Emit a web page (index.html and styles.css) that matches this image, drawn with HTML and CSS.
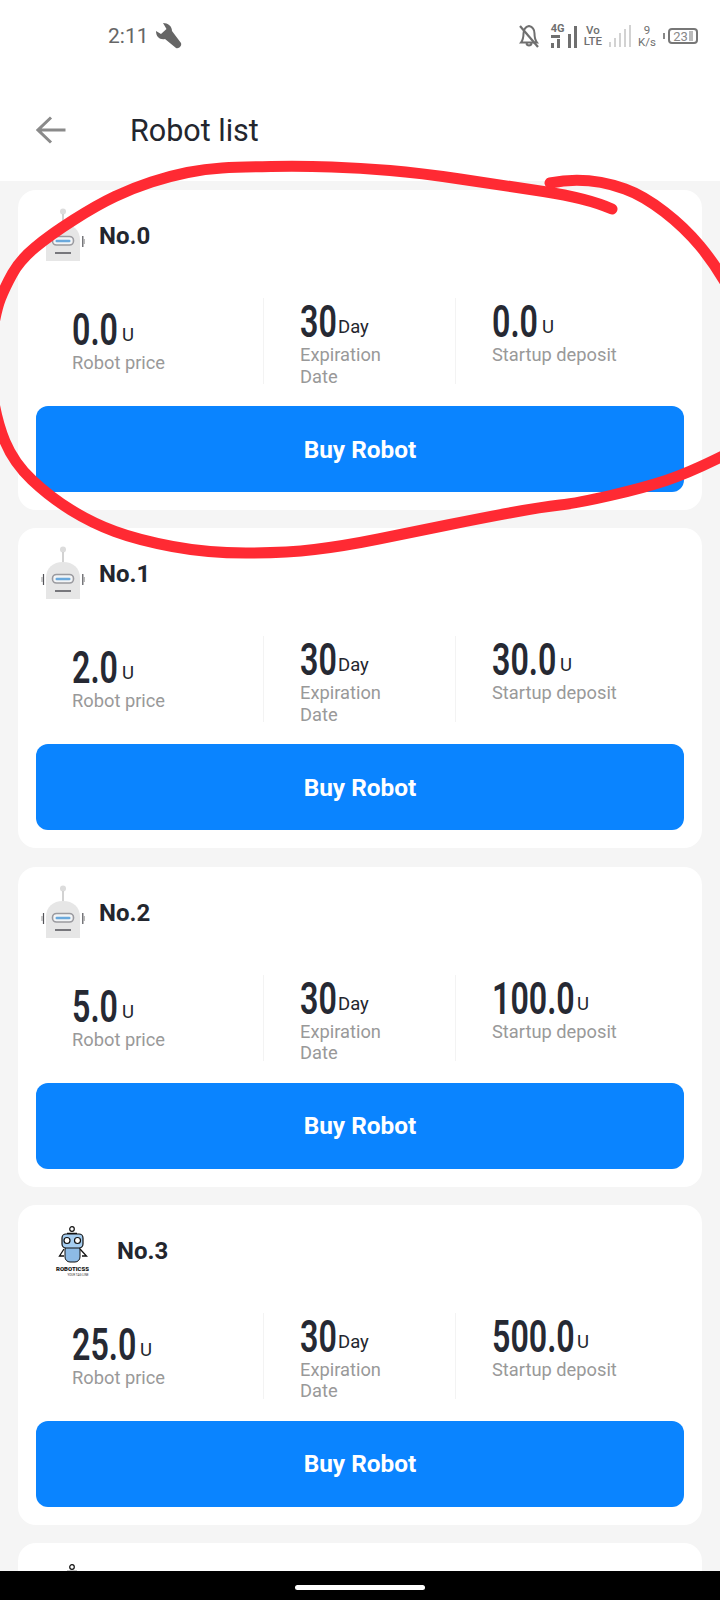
FILE: index.html
```html
<!DOCTYPE html>
<html lang="en">
<head>
  <meta charset="UTF-8">
  <meta name="viewport" content="width=device-width, initial-scale=1.0">
  <title>Robot list</title>
  <link rel="stylesheet" href="styles.css">
</head>
<body>
  <svg width="0" height="0" class="defs">
    <symbol id="robot" viewBox="0 0 54 54">
      <circle cx="27" cy="3.500" r="3" fill="#dcdcdc"/>
      <rect x="26.200" y="6" width="1.600" height="10" fill="#c8c8c8"/>
      <path d="M10 53V32C10 22 17 16 27 16S44 22 44 32V53Z" fill="#e6e6e6"/>
      <rect x="16.500" y="28.500" width="21" height="8.500" rx="4" fill="#f2f4f6" stroke="#9a9a9f" stroke-width="1.600"/>
      <rect x="19.500" y="31.800" width="15" height="2.400" rx="1.200" fill="#6aa9dc"/>
      <rect x="19" y="44" width="16" height="2" fill="#77777c"/>
      <path d="M7.500 28V39M46.800 28V39" stroke="#55555a" stroke-width="1.200"/>
      <path d="M6 31V36M48.200 31V36" stroke="#999" stroke-width="1"/>
    </symbol>
    <symbol id="logo-bot" viewBox="0 0 72 54">
      <circle cx="36" cy="6" r="2.300" fill="none" stroke="#111" stroke-width="1.200"/>
      <path d="M31 10.500H41" stroke="#111" stroke-width="1.500"/>
      <path d="M28 26L23.500 33H28M44 26L50.500 33H46" fill="none" stroke="#111" stroke-width="1.300"/>
      <rect x="29" y="22" width="15" height="17" rx="5" fill="#8dbbe6" stroke="#111" stroke-width="1"/>
      <rect x="26" y="11" width="21" height="14" rx="4" fill="#a5cdf0" stroke="#111" stroke-width="1.200"/>
      <circle cx="31" cy="17.500" r="3" fill="#fff" stroke="#111" stroke-width="1.200"/>
      <circle cx="41.500" cy="17.500" r="3" fill="#fff" stroke="#111" stroke-width="1.200"/>
    </symbol>
  </svg>

  <header class="top">
    <div class="status">
      <div class="clock">
        <span>2:11</span>
        <svg width="26" height="26" viewBox="0 0 26 26"><path d="M7 0C12 0 16 3 16 8L25 20C26 23 23 26 20 25L9 16C4 17 0 14 0 8L5 11L10.500 6Z" fill="#666"/></svg>
      </div>
      <div class="sys">
        <svg class="bell" width="22" height="24" viewBox="0 0 22 24"><path d="M11 2C7 3 5.500 6 5.500 9.500C5.500 14 5 16 3 18.500H19C17 16 16.500 14 16.500 9.500C16.500 6 15 3 11 2ZM8.500 19.500C9 22 13 22 13.500 19.500" fill="none" stroke="#6f6f6f" stroke-width="2"/><path d="M2 2L20 23" stroke="#6f6f6f" stroke-width="2.200"/></svg>
        <div class="net">
          <div class="net-tag">
            <span>4G</span>
            <i class="updown"></i>
            <div class="bars short"><i class="bar b1"></i><i class="bar b2"></i></div>
          </div>
          <div class="bars"><i class="bar b3"></i><i class="bar b4"></i></div>
        </div>
        <div class="volte"><span>Vo</span><span>LTE</span></div>
        <div class="bars faint">
          <i class="bar b1"></i><i class="bar b2"></i><i class="bar b3"></i><i class="bar b4"></i><i class="bar b5"></i>
        </div>
        <div class="speed"><span>9</span><span>K/s</span></div>
        <div class="battery">
          <i class="pip"></i>
          <div class="cell">23<i class="charge"></i></div>
        </div>
      </div>
    </div>
    <div class="toolbar">
      <svg class="back" width="30" height="28" viewBox="0 0 30 28"><path d="M29.500 14H2M15 1.500L2 14L15 26.500" fill="none" stroke="#8a8a8a" stroke-width="3"/></svg>
      <h1>Robot list</h1>
    </div>
  </header>

  <main class="list">
    <section class="card">
      <div class="card-head">
        <svg class="pic" viewBox="0 0 54 54"><use href="#robot"/></svg>
        <h2>No.0</h2>
      </div>
      <div class="stats">
        <div class="stat first">
          <div class="value"><b class="num n3"><span>0.0</span></b><span class="unit">U</span></div>
          <p>Robot price</p>
        </div>
        <div class="stat">
          <div class="value"><b class="num n2"><span>30</span></b><span class="unit">Day</span></div>
          <p>Expiration Date</p>
        </div>
        <div class="stat">
          <div class="value"><b class="num n3"><span>0.0</span></b><span class="unit">U</span></div>
          <p>Startup deposit</p>
        </div>
      </div>
      <button class="buy">Buy Robot</button>
    </section>

    <section class="card">
      <div class="card-head">
        <svg class="pic" viewBox="0 0 54 54"><use href="#robot"/></svg>
        <h2>No.1</h2>
      </div>
      <div class="stats">
        <div class="stat first">
          <div class="value"><b class="num n3"><span>2.0</span></b><span class="unit">U</span></div>
          <p>Robot price</p>
        </div>
        <div class="stat">
          <div class="value"><b class="num n2"><span>30</span></b><span class="unit">Day</span></div>
          <p>Expiration Date</p>
        </div>
        <div class="stat">
          <div class="value"><b class="num n4"><span>30.0</span></b><span class="unit">U</span></div>
          <p>Startup deposit</p>
        </div>
      </div>
      <button class="buy">Buy Robot</button>
    </section>

    <section class="card">
      <div class="card-head">
        <svg class="pic" viewBox="0 0 54 54"><use href="#robot"/></svg>
        <h2>No.2</h2>
      </div>
      <div class="stats">
        <div class="stat first">
          <div class="value"><b class="num n3"><span>5.0</span></b><span class="unit">U</span></div>
          <p>Robot price</p>
        </div>
        <div class="stat">
          <div class="value"><b class="num n2"><span>30</span></b><span class="unit">Day</span></div>
          <p>Expiration Date</p>
        </div>
        <div class="stat">
          <div class="value"><b class="num n5"><span>100.0</span></b><span class="unit">U</span></div>
          <p>Startup deposit</p>
        </div>
      </div>
      <button class="buy">Buy Robot</button>
    </section>

    <section class="card">
      <div class="card-head">
        <svg class="pic wide" viewBox="0 0 72 54">
          <use href="#logo-bot"/>
          <text x="36.500" y="48" class="logo-name">ROBOTICSS</text>
          <text x="42" y="52.500" class="logo-tag">YOUR TAG LINE</text>
        </svg>
        <h2>No.3</h2>
      </div>
      <div class="stats">
        <div class="stat first">
          <div class="value"><b class="num n4"><span>25.0</span></b><span class="unit">U</span></div>
          <p>Robot price</p>
        </div>
        <div class="stat">
          <div class="value"><b class="num n2"><span>30</span></b><span class="unit">Day</span></div>
          <p>Expiration Date</p>
        </div>
        <div class="stat">
          <div class="value"><b class="num n5"><span>500.0</span></b><span class="unit">U</span></div>
          <p>Startup deposit</p>
        </div>
      </div>
      <button class="buy">Buy Robot</button>
    </section>

    <section class="card">
      <div class="card-head">
        <svg class="pic wide" viewBox="0 0 72 54"><use href="#logo-bot"/></svg>
      </div>
    </section>
  </main>

  <!-- Red marker scribble on top of the first card -->
  <svg class="scribble" width="720" height="600" viewBox="0 0 720 600">
    <path d="M612 209Q587 198 543.500 191.500Q500 185 460 179Q420 173 390 170.500Q360 168 331.500 167Q303 166 271 166.500Q239 167 222 168Q205 169 187.500 172.500Q170 176 151.500 182Q133 188 115 196.500Q97 205 73.500 220Q50 235 35 247.500Q20 260 12.500 273.500Q5 287 0.500 298.500Q-4 310 -8 335Q-12 360 -8 390Q-4 420 5 441.500Q14 463 32 480Q50 497 71 510Q92 523 115 531.500Q138 540 172.500 546.500Q207 553 246 553Q285 553 314.500 549.500Q344 546 378.500 539Q413 532 447.500 525Q482 518 512 512.500Q542 507 560 505Q578 503 610.500 495.500Q643 488 666 480.500Q689 473 725 455"/>
    <path d="M550 183C575 178 600 180 625 189C650 198 680 222 700 246C710 258 718 270 725 282"/>
  </svg>

  <div class="navbar"><i class="pill"></i></div>
</body>
</html>
```

FILE: styles.css
```css
/* Reset and basic styles */
html, body {
  margin: 0;
  height: 1600px;
  overflow: hidden;
}

body {
  position: relative;
  width: 720px;
  background-color: #f5f5f5;
  color: #23262e;
  font-family: Roboto, "Liberation Sans", sans-serif;
}

.defs {
  display: block;
  height: 0;
}

.logo-name {
  font-size: 6px;
  font-weight: 900;
  text-anchor: middle;
  fill: #111;
}

.logo-tag {
  font-size: 3px;
  text-anchor: middle;
  fill: #333;
}

/* Header */
.top {
  height: 181px;
  background-color: #fff;
}

.status {
  display: flex;
  justify-content: space-between;
  align-items: center;
  height: 72px;
  padding: 0 22px 0 108px;
}

.clock {
  display: flex;
  align-items: center;
  gap: 7px;
  font-size: 21px;
  color: #666;
}

.sys {
  display: flex;
  align-items: center;
  gap: 7px;
  color: #6f6f6f;
}

.net {
  display: flex;
  align-items: flex-end;
  gap: 4px;
  margin-left: 4px;
}

.net-tag {
  display: flex;
  flex-direction: column;
  align-items: flex-start;
  width: 13px;
  font-size: 11px;
  font-weight: 700;
  line-height: 10px;
}

.updown {
  width: 9px;
  height: 3px;
  margin: 1px 0;
  background-color: #6f6f6f;
}

.bars {
  display: flex;
  align-items: flex-end;
  gap: 3px;
  height: 22px;
}

.bars.short {
  height: 9px;
}

.bar {
  width: 3px;
  background-color: #6f6f6f;
}

.b1 { height: 5px; }
.b2 { height: 9px; }
.b3 { height: 14px; }
.b4 { height: 22px; }
.b5 { height: 18px; }

.faint .bar {
  width: 2px;
  background-color: #d2d2d2;
}

.faint .b4 { height: 18px; }
.faint .b5 { height: 22px; }

.volte {
  display: flex;
  flex-direction: column;
  align-items: center;
  font-size: 11.5px;
  font-weight: 500;
  line-height: 11px;
}

.speed {
  display: flex;
  flex-direction: column;
  align-items: center;
  font-size: 11.5px;
  line-height: 12px;
}

.battery {
  display: flex;
  align-items: center;
  gap: 3px;
}

.pip {
  width: 2px;
  height: 6px;
  background-color: #888;
}

.cell {
  display: flex;
  align-items: center;
  justify-content: center;
  box-sizing: border-box;
  width: 30px;
  height: 16px;
  border: 2px solid #777;
  border-radius: 4px;
  font-size: 13px;
  color: #888;
}

.charge {
  width: 4px;
  height: 10px;
  margin-left: 1px;
  background-color: #bbb;
}

.toolbar {
  display: flex;
  align-items: center;
  height: 88px;
  margin-top: 14px;
  padding-left: 36px;
}

.back {
  margin-right: 64px;
}

h1 {
  margin: 0;
  font-size: 30.5px;
  font-weight: 400;
}

/* Robot cards */
.list {
  display: flex;
  flex-direction: column;
  gap: 18.3px;
  padding: 9px 18px 0;
}

.card {
  flex: none;
  box-sizing: border-box;
  height: 320px;
  padding: 18px 18px 18px;
  background-color: #fff;
  border-radius: 18px;
}

.card-head {
  display: flex;
  align-items: center;
  gap: 9px;
  height: 54px;
}

.pic {
  width: 54px;
  height: 54px;
}

.pic.wide {
  width: 72px;
}

h2 {
  margin: 2px 0 0;
  font-size: 24px;
  font-weight: 700;
}

.stats {
  display: grid;
  grid-template-columns: 227px 192px 229px;
  grid-template-rows: 86px;
  height: 86px;
  margin-top: 36px;
}

.stat {
  box-sizing: border-box;
  padding: 9px 36px 0 36px;
  border-left: 1px solid #f3f3f3;
}

.stat.first {
  padding-top: 17px;
  border-left: 0;
}

.value {
  display: flex;
  align-items: flex-end;
  gap: 4px;
  height: 31px;
}

/* Big numbers are Roboto squeezed, the app uses a condensed face */
.num {
  display: block;
  font-size: 43.5px;
  font-weight: 600;
  line-height: 31px;
  white-space: nowrap;
  color: #262933;
}

.num span {
  display: inline-block;
  transform: scaleX(0.74);
  transform-origin: left;
}

.n2 { width: 34px; }
.n3 { width: 46px; }
.n4 { width: 64px; }
.n5 { width: 81px; }

.unit {
  margin-bottom: 2px;
  font-size: 18.5px;
  line-height: 18px;
}

.stat p {
  margin: 6px 0 0;
  font-size: 18.3px;
  line-height: 21.5px;
  color: #999;
}

.buy {
  display: block;
  width: 100%;
  height: 86px;
  margin-top: 22px;
  border: 0;
  border-radius: 12px;
  background-color: #0a84ff;
  color: #fff;
  font-family: inherit;
  font-size: 24.4px;
  font-weight: 700;
}

/* Overlays */
.scribble {
  position: absolute;
  top: 0;
  left: 0;
}

.scribble path {
  fill: none;
  stroke: #ff2a33;
  stroke-width: 11;
  stroke-linecap: round;
  stroke-linejoin: round;
}

.navbar {
  position: absolute;
  left: 0;
  right: 0;
  bottom: 0;
  display: flex;
  justify-content: center;
  height: 29px;
  background-color: #000;
}

.pill {
  width: 130px;
  height: 5px;
  margin-top: 14px;
  border-radius: 3px;
  background-color: #fff;
}
```
